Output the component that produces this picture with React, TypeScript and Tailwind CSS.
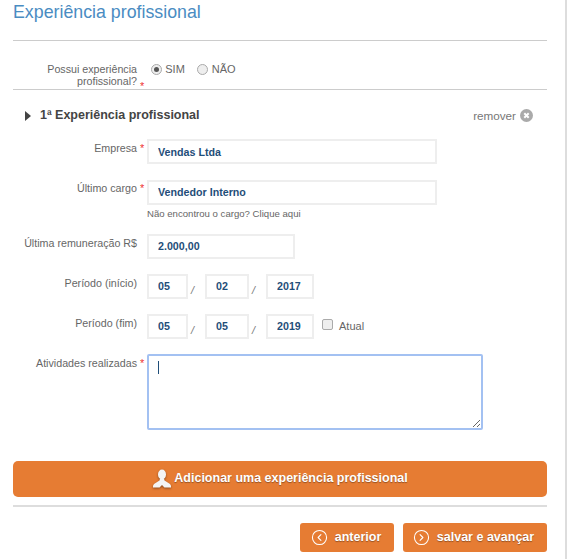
import { CircleChevronLeft, CircleChevronRight } from 'lucide-react'

const labelClass = 'w-[124px] shrink-0 text-right text-[10.7px] leading-[12px] text-[#666]'
const inputClass = 'h-[25px] border-2 border-[#eee] bg-white pl-[9px] text-[10.7px] font-bold text-[#1f4e79] outline-none'

function Req() {
  return <span className="w-[10px] shrink-0 pl-[3px] text-[11px] leading-[12px] text-[#e33]">*</span>
}

function Slash() {
  return <span className="mt-[8px] w-[17px] pl-[3px] text-[11px] italic text-[#777]">/</span>
}

function Field({ label, required, children }: { label: string; required?: boolean; children: React.ReactNode }) {
  return (
    <div className="flex items-start">
      <label className={`${labelClass} pt-[3px] whitespace-nowrap`}>{label}</label>
      <span className="flex w-[10px] shrink-0 pt-[3px]">{required && <Req />}</span>
      {children}
    </div>
  )
}

function PersonIcon() {
  return (
    <svg width="20" height="20" viewBox="0 0 20 20" className="drop-shadow-[0_1px_1px_rgba(0,0,0,0.4)]">
      <ellipse cx="10" cy="5.5" rx="4" ry="5" fill="#f4f4f4" />
      <path d="M8 9.5 L12 9.5 L12.5 11.5 L18 15 Q19.5 16.5 19 18.5 L12.5 18.5 L10 16 L7.5 18.5 L1 18.5 Q0.5 16.5 2 15 L7.5 11.5 Z" fill="#f4f4f4" />
    </svg>
  )
}

export default function App() {
  return (
    <div className="w-[567px] h-[559px] overflow-hidden bg-white border-r-2 border-[#ddd] font-['Liberation_Sans',Arial,sans-serif]">
      <div className="w-[534px] ml-[13px]">
        <h1 className="h-[40px] pt-[2px] text-[17.8px] leading-[21px] text-[#4a8cc2]">Experiência profissional</h1>
        <hr className="border-t border-[#ccc]" />

        <div className="flex items-start pt-[22px] h-[48px]">
          <div className={labelClass}>
            Possui experiência<br />profissional?
          </div>
          <div className="mt-[10px]"><Req /></div>
          <div className="ml-[7px] flex items-center text-[11px] leading-[12px] text-[#666]">
            <span className="flex h-[11px] w-[11px] items-center justify-center rounded-full border border-[#aaa] bg-[#eee]">
              <span className="h-[5px] w-[5px] rounded-full bg-[#555]" />
            </span>
            <span className="ml-[3px] mr-[12px]">SIM</span>
            <span className="h-[11px] w-[11px] rounded-full border border-[#aaa] bg-[#eee]" />
            <span className="ml-[4px]">NÃO</span>
          </div>
        </div>
        <hr className="border-t border-[#ccc]" />

        <div className="flex h-[49px] items-center justify-between pl-[12px] pt-[2px] pr-[14px]">
          <div className="flex items-center gap-[9px]">
            <svg width="6" height="10" viewBox="0 0 6 10"><path d="M0 0 L6 5 L0 10 Z" fill="#444" /></svg>
            <span className="text-[12.5px] font-bold text-[#444]">1ª Experiência profissional</span>
          </div>
          <div className="flex items-center gap-[4px] text-[11.7px] text-[#777]">
            remover
            <svg width="13" height="13" viewBox="0 0 13 13">
              <circle cx="6.5" cy="6.5" r="6.5" fill="#aaa" />
              <path d="M4.3 4.3 L8.7 8.7 M8.7 4.3 L4.3 8.7" stroke="#fff" strokeWidth="2" />
            </svg>
          </div>
        </div>

        <Field label="Empresa" required>
          <input readOnly defaultValue="Vendas Ltda" className={`${inputClass} w-[290px]`} />
        </Field>

        <div className="mt-[15px]">
          <Field label="Último cargo" required>
            <div>
              <input readOnly defaultValue="Vendedor Interno" className={`${inputClass} w-[290px]`} />
              <p className="mt-[3px] text-[9.6px] leading-[12px] text-[#666]">Não encontrou o cargo? Clique aqui</p>
            </div>
          </Field>
        </div>

        <div className="mt-[14px]">
          <Field label="Última remuneração R$">
            <input readOnly defaultValue="2.000,00" className={`${inputClass} w-[148px]`} />
          </Field>
        </div>

        <div className="mt-[15px]">
          <Field label="Período (início)">
            <input readOnly defaultValue="05" className={`${inputClass} w-[41px]`} />
            <Slash />
            <input readOnly defaultValue="02" className={`${inputClass} w-[44px]`} />
            <Slash />
            <input readOnly defaultValue="2017" className={`${inputClass} w-[48px]`} />
          </Field>
        </div>

        <div className="mt-[15px]">
          <Field label="Período (fim)">
            <input readOnly defaultValue="05" className={`${inputClass} w-[41px]`} />
            <Slash />
            <input readOnly defaultValue="05" className={`${inputClass} w-[44px]`} />
            <Slash />
            <input readOnly defaultValue="2019" className={`${inputClass} w-[48px]`} />
            <span className="ml-[8px] mt-[5px] h-[11px] w-[11px] rounded-[2px] border border-[#aaa] bg-[#eee]" />
            <span className="ml-[6px] mt-[5px] text-[11px] leading-[14px] text-[#666]">Atual</span>
          </Field>
        </div>

        <div className="mt-[15px]">
          <Field label="Atividades realizadas" required>
            <div className="relative h-[76px]">
              <textarea readOnly className="block h-[76px] w-[336px] rounded-[2px] border-2 border-[#a3c1f2] bg-white outline-none" />
              <span className="absolute left-[11px] top-[7px] h-[13px] w-px bg-[#1f4e79]" />
            </div>
          </Field>
        </div>

        <button className="mt-[31px] flex h-[36px] w-full items-center justify-center gap-[2px] rounded-[5px] bg-[#e67c33] text-[12.5px] font-bold text-white [text-shadow:0_1px_1px_rgba(0,0,0,0.35)]">
          <PersonIcon />
          Adicionar uma experiência profissional
        </button>
        <hr className="mt-[8px] border-t-2 border-[#ddd]" />

        <div className="mt-[16px] flex justify-end gap-[9px]">
          <button className="flex h-[29px] w-[94px] items-center justify-center gap-[7px] rounded-[3px] bg-[#e67c33] pr-[2px] text-[12.5px] font-bold text-white [text-shadow:0_1px_1px_rgba(0,0,0,0.35)]">
            <CircleChevronLeft size={17} strokeWidth={1.5} />
            anterior
          </button>
          <button className="flex h-[29px] w-[144px] items-center justify-center gap-[7px] rounded-[3px] bg-[#e67c33] pr-[3px] text-[12.5px] font-bold text-white [text-shadow:0_1px_1px_rgba(0,0,0,0.35)]">
            <CircleChevronRight size={17} strokeWidth={1.5} />
            salvar e avançar
          </button>
        </div>
      </div>
    </div>
  )
}
